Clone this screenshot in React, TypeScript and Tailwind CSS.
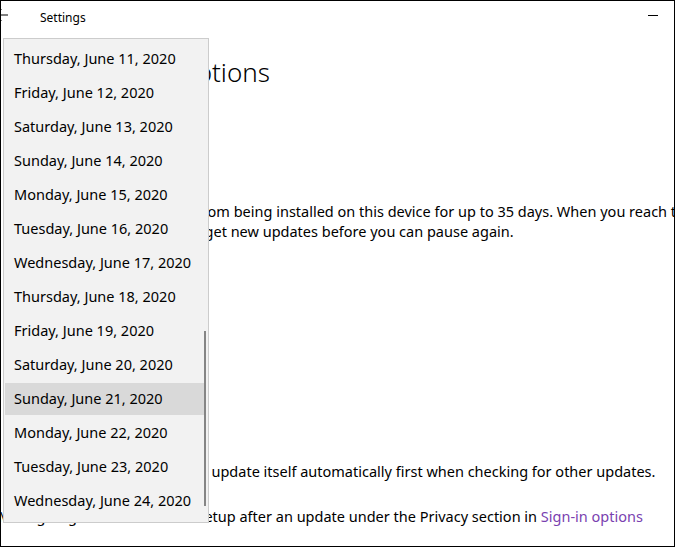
import React from 'react'

const dates = [
  'Thursday, June 11, 2020',
  'Friday, June 12, 2020',
  'Saturday, June 13, 2020',
  'Sunday, June 14, 2020',
  'Monday, June 15, 2020',
  'Tuesday, June 16, 2020',
  'Wednesday, June 17, 2020',
  'Thursday, June 18, 2020',
  'Friday, June 19, 2020',
  'Saturday, June 20, 2020',
  'Sunday, June 21, 2020',
  'Monday, June 22, 2020',
  'Tuesday, June 23, 2020',
  'Wednesday, June 24, 2020',
]

const selected = 'Sunday, June 21, 2020'

function DateList() {
  return (
    <div className="absolute left-[2px] top-[37px] w-[206px] h-[485px] border border-[#cccccc] bg-[#f2f2f2] py-[3px]">
      {dates.map((d) => (
        <div
          key={d}
          className={
            d === selected
              ? 'h-[32px] my-[1px] ml-[1px] mr-[2px] pl-[9px] flex items-center bg-[#d9d9d9] text-[14.5px] text-black'
              : 'h-[34px] pl-[10px] flex items-center text-[14.5px] text-black'
          }
        >
          <span className="mt-[-1px]">{d}</span>
        </div>
      ))}
      <div className="absolute right-[2px] top-[292px] w-[2px] h-[175px] bg-[#858585]" />
    </div>
  )
}

export default function App() {
  return (
    <div className="w-[676px] h-[548px] bg-white" style={{ fontFamily: '"Noto Sans", "Open Sans", sans-serif' }}>
      <div className="relative w-[675px] h-[547px] border border-black overflow-hidden flex flex-col">
        <div className="h-[32px] shrink-0 flex items-center">
          <svg width="10" height="14" viewBox="0 0 10 14" className="ml-[-1px] mt-[-4px]">
            <path d="M0 7 H8 M0 2 L1.5 1.5 M0 12 L1.5 12.5" stroke="#000" strokeWidth="1" fill="none" />
          </svg>
          <span className="ml-[30px] mt-[2px] text-[12px] text-black">Settings</span>
          <div className="ml-auto mr-[16px] mt-[-4px] w-[10px] h-[1px] bg-black" />
        </div>

        <div className="text-black whitespace-nowrap text-[14.5px] leading-[20px]">
          <h1 className="mt-[21px] h-[36px] leading-[36px] pl-[58px] text-[26px] font-light">Advanced options</h1>
          <div className="mt-[111px] pl-[7px]">
            Temporarily pause updates from being installed on this device for up to 35 days. When you reach the pause
          </div>
          <div className="pl-[2px]">limit, your device will need to get new updates before you can pause again.</div>
          <div className="mt-[220px] pl-[6px]">
            Note: Windows Update might update itself automatically first when checking for other updates.
          </div>
          <div className="mt-[25px] ml-[-3px]">
            Manage sign-in info used for setup after an update under the Privacy section in{' '}
            <span className="text-[#7a3fb0]">Sign-in options</span>
          </div>
        </div>

        <DateList />
      </div>
    </div>
  )
}
